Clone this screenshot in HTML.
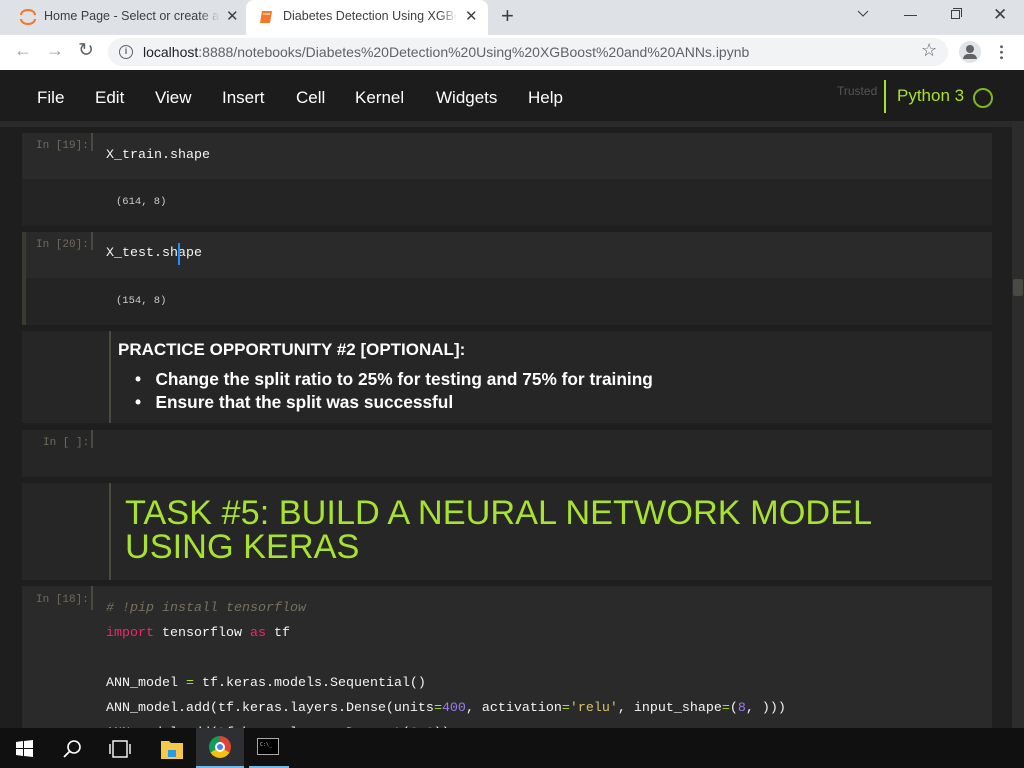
<!DOCTYPE html>
<html><head><meta charset="utf-8"><style>
*{margin:0;padding:0;box-sizing:border-box}
body{width:1024px;height:768px;overflow:hidden;background:#1e1e1e;font-family:"Liberation Sans",sans-serif;position:relative}
.a{position:absolute}
.mono{font-family:"Liberation Mono",monospace;font-size:13.33px;white-space:pre}
.cin{background:#2a2a2a}
.cout{background:#242424}
.pr{position:absolute;left:36px;font-family:"Liberation Mono",monospace;font-size:11px;color:#6f6a5c}
.pbar{position:absolute;left:91px;width:2px;height:18px;background:#4a4a42}
.code{color:#f4f4f4}
.kw{color:#f0266f}.num{color:#9b7cf0}.op{color:#a6e22e}.str{color:#d8c36a}.cm{color:#75715e;font-style:italic}
.menu span{position:absolute;top:88px;color:#fff;font-size:17px}
.tt{white-space:nowrap;overflow:hidden}
</style></head><body>
<!-- tab bar -->
<div class="a" style="left:0;top:0;width:1024px;height:35px;background:#dee1e6"></div>
<div class="a" style="left:246px;top:0;width:242px;height:35px;background:#fff;border-radius:8px 8px 0 0"></div>
<svg class="a" style="left:19px;top:9px" width="18" height="16"><path d="M2 6 A7 5 0 0 1 16 6" stroke="#f37726" stroke-width="2" fill="none"/><path d="M2 10 A7 5 0 0 0 16 10" stroke="#f37726" stroke-width="2" fill="none"/></svg>
<div class="a tt" style="left:44px;top:9px;width:176px;font-size:12.5px;color:#3c4043;-webkit-mask-image:linear-gradient(90deg,#000 88%,transparent)">Home Page - Select or create a notebook</div>
<div class="a" style="left:226px;top:7px;font-size:15px;color:#3c4043">✕</div>
<svg class="a" style="left:259px;top:10px" width="14" height="14"><path d="M3 1h10l-2 12H1z" fill="#f37726"/><path d="M4 4h7" stroke="#fff" stroke-width="1"/></svg>
<div class="a tt" style="left:283px;top:9px;width:174px;font-size:12.5px;color:#3c4043;-webkit-mask-image:linear-gradient(90deg,#000 90%,transparent)">Diabetes Detection Using XGBoost</div>
<div class="a" style="left:465px;top:7px;font-size:15px;color:#3c4043">✕</div>
<div class="a" style="left:501px;top:3px;font-size:22px;color:#3c4043">+</div>
<svg class="a" style="left:857px;top:10px" width="12" height="8"><path d="M1 1l5 5 5-5" stroke="#3c4043" fill="none"/></svg>
<div class="a" style="left:904px;top:15px;width:13px;height:1px;background:#3c4043"></div>
<div class="a" style="left:951px;top:10px;width:9px;height:9px;border:1px solid #3c4043"></div>
<div class="a" style="left:953px;top:8px;width:9px;height:9px;border-top:1px solid #3c4043;border-right:1px solid #3c4043"></div>
<div class="a" style="left:993px;top:5px;font-size:17px;color:#3c4043">✕</div>
<!-- address bar -->
<div class="a" style="left:0;top:35px;width:1024px;height:35px;background:#fff"></div>
<div class="a" style="left:14px;top:40px;font-size:18px;color:#9aa0a6">←</div>
<div class="a" style="left:46px;top:40px;font-size:18px;color:#9aa0a6">→</div>
<div class="a" style="left:78px;top:39px;font-size:19px;color:#5f6368">↻</div>
<div class="a" style="left:108px;top:38px;width:840px;height:28px;background:#f1f3f4;border-radius:14px"></div>
<div class="a" style="left:119px;top:45px;width:14px;height:14px;border:1.5px solid #5f6368;border-radius:50%;font-size:9px;text-align:center;line-height:11px;color:#5f6368;font-weight:bold">i</div>
<div class="a" style="left:143px;top:44px;font-size:14px;color:#202124">localhost<span style="color:#5f6368">:8888/notebooks/Diabetes%20Detection%20Using%20XGBoost%20and%20ANNs.ipynb</span></div>
<div class="a" style="left:921px;top:40px;font-size:18px;color:#5f6368">☆</div>
<div class="a" style="left:959px;top:41px;width:22px;height:22px;border-radius:50%;background:#e0e3e7"></div>
<div class="a" style="left:966px;top:45px;width:8px;height:8px;border-radius:50%;background:#5f6368"></div>
<div class="a" style="left:963px;top:54px;width:14px;height:5px;border-radius:5px 5px 0 0;background:#5f6368"></div>
<div class="a" style="left:1000px;top:44px;width:3px;height:16px;background:radial-gradient(circle,#5f6368 1.3px,transparent 1.6px) 0 0/3px 5.5px"></div>
<!-- menu -->
<div class="a" style="left:0;top:70px;width:1024px;height:51px;background:#1c1c1c"></div>
<div class="menu"><span style="left:37px">File</span><span style="left:95px">Edit</span><span style="left:155px">View</span><span style="left:222px">Insert</span><span style="left:296px">Cell</span><span style="left:355px">Kernel</span><span style="left:436px">Widgets</span><span style="left:528px">Help</span></div>
<div class="a" style="left:837px;top:84px;font-size:12px;color:#555">Trusted</div>
<div class="a" style="left:884px;top:80px;width:2px;height:33px;background:#a6e22e"></div>
<div class="a" style="left:897px;top:86px;font-size:17px;color:#a6e22e">Python 3</div>
<div class="a" style="left:973px;top:88px;width:20px;height:20px;border:2px solid #7fb71d;border-radius:50%"></div>
<div class="a" style="left:0;top:121px;width:1024px;height:6px;background:#2a2a2a"></div>
<div class="a" style="left:992px;top:127px;width:20px;height:601px;background:#1f1f1f"></div>
<div class="a" style="left:1012px;top:121px;width:12px;height:607px;background:#2c2c2c"></div>
<div class="a" style="left:1013px;top:279px;width:10px;height:17px;background:#4a4a42;border-radius:2px"></div>
<!-- cell 19 -->
<div class="a cin" style="left:22px;top:133px;width:970px;height:46px"></div>
<div class="a cout" style="left:22px;top:179px;width:970px;height:47px"></div>
<div class="pr" style="top:140px">In [19]:</div><div class="pbar" style="top:133px"></div>
<div class="a mono code" style="left:106px;top:148px">X_train.shape</div>
<div class="a mono" style="left:116px;top:196px;font-size:10.5px;color:#ccc">(614, 8)</div>
<!-- cell 20 -->
<div class="a cin" style="left:22px;top:232px;width:970px;height:46px"></div>
<div class="a cout" style="left:22px;top:278px;width:970px;height:47px"></div>
<div class="a" style="left:22px;top:232px;width:4px;height:93px;background:#3a3a30"></div>
<div class="pr" style="top:239px">In [20]:</div><div class="pbar" style="top:232px"></div>
<div class="a mono code" style="left:106px;top:246px">X_test.shape</div>
<div class="a" style="left:178px;top:243px;width:2px;height:22px;background:#1e90ff"></div>
<div class="a mono" style="left:116px;top:295px;font-size:10.5px;color:#ccc">(154, 8)</div>
<!-- markdown -->
<div class="a cout" style="left:22px;top:331px;width:970px;height:92px;background:#262626"></div>
<div class="a" style="left:109px;top:331px;width:2px;height:92px;background:#4a4a42"></div>
<div class="a" style="left:118px;top:340px;font-size:17px;font-weight:bold;color:#fff">PRACTICE OPPORTUNITY #2 [OPTIONAL]:</div>
<div class="a" style="left:135px;top:368px;font-size:17.3px;font-weight:bold;color:#fff;line-height:23px">•&nbsp;&nbsp;&nbsp;Change the split ratio to 25% for testing and 75% for training<br>•&nbsp;&nbsp;&nbsp;Ensure that the split was successful</div>
<!-- empty cell -->
<div class="a cin" style="left:22px;top:430px;width:970px;height:47px;background:#262626"></div>
<div class="pr" style="top:437px;left:43px">In [ ]:</div><div class="pbar" style="top:430px"></div>
<!-- heading -->
<div class="a" style="left:22px;top:483px;width:970px;height:97px;background:#262626"></div>
<div class="a" style="left:109px;top:483px;width:2px;height:97px;background:#4a4a42"></div>
<div class="a" style="left:125px;top:496px;font-size:34.3px;line-height:34px;color:#a6e22e">TASK #5: BUILD A NEURAL NETWORK MODEL<br>USING KERAS</div>
<!-- cell 18 -->
<div class="a cin" style="left:22px;top:586px;width:970px;height:142px"></div>
<div class="pr" style="top:594px">In [18]:</div><div class="pbar" style="top:586px;height:24px"></div>
<div class="a mono code" style="left:106px;top:596px;line-height:25px"><span class="cm"># !pip install tensorflow</span>
<span class="kw">import</span> tensorflow <span class="kw">as</span> tf

ANN_model <span class="op">=</span> tf.keras.models.Sequential()
ANN_model.add(tf.keras.layers.Dense(units<span class="op">=</span><span class="num">400</span>, activation<span class="op">=</span><span class="str">'relu'</span>, input_shape<span class="op">=</span>(<span class="num">8</span>, )))
ANN_model.add(tf.keras.layers.Dropout(<span class="num">0.2</span>))</div>
<!-- taskbar -->
<div class="a" style="left:0;top:728px;width:1024px;height:40px;background:#101010"></div>
<svg class="a" style="left:16px;top:740px" width="17" height="17"><path d="M0 2l7-1v7H0zM8 1l9-1v8H8zM0 9h7v7l-7-1zM8 9h9v8l-9-1z" fill="#fff"/></svg>
<svg class="a" style="left:62px;top:739px" width="20" height="20"><circle cx="12" cy="8" r="6" stroke="#fff" stroke-width="1.6" fill="none"/><path d="M8 12l-6 6" stroke="#fff" stroke-width="1.8"/></svg>
<svg class="a" style="left:108px;top:739px" width="24" height="20"><rect x="5" y="2" width="14" height="16" stroke="#fff" fill="none" stroke-width="1.4"/><path d="M2 5v10M22 5v10" stroke="#fff" stroke-width="1.4"/></svg>
<svg class="a" style="left:160px;top:738px" width="24" height="22"><path d="M1 3h8l2 2h12v16H1z" fill="#f6c84a"/><rect x="8" y="12" width="8" height="7" fill="#2b9ae6"/></svg>
<div class="a" style="left:196px;top:728px;width:48px;height:40px;background:#2d2f33"></div>
<div class="a" style="left:196px;top:766px;width:48px;height:2px;background:#76b9ed"></div>
<div class="a" style="left:209px;top:736px;width:22px;height:22px;border-radius:50%;background:conic-gradient(#db4437 0 120deg,#f4c20d 120deg 240deg,#0f9d58 240deg 360deg)"></div>
<div class="a" style="left:215px;top:742px;width:10px;height:10px;border-radius:50%;background:#4285f4;border:2px solid #fff"></div>
<div class="a" style="left:249px;top:766px;width:40px;height:2px;background:#76b9ed"></div>
<div class="a" style="left:257px;top:738px;width:22px;height:17px;background:#000;border:1px solid #aaa"></div>
<div class="a" style="left:260px;top:742px;font-size:5px;color:#ccc;font-family:monospace">C:\_</div>
</body></html>
